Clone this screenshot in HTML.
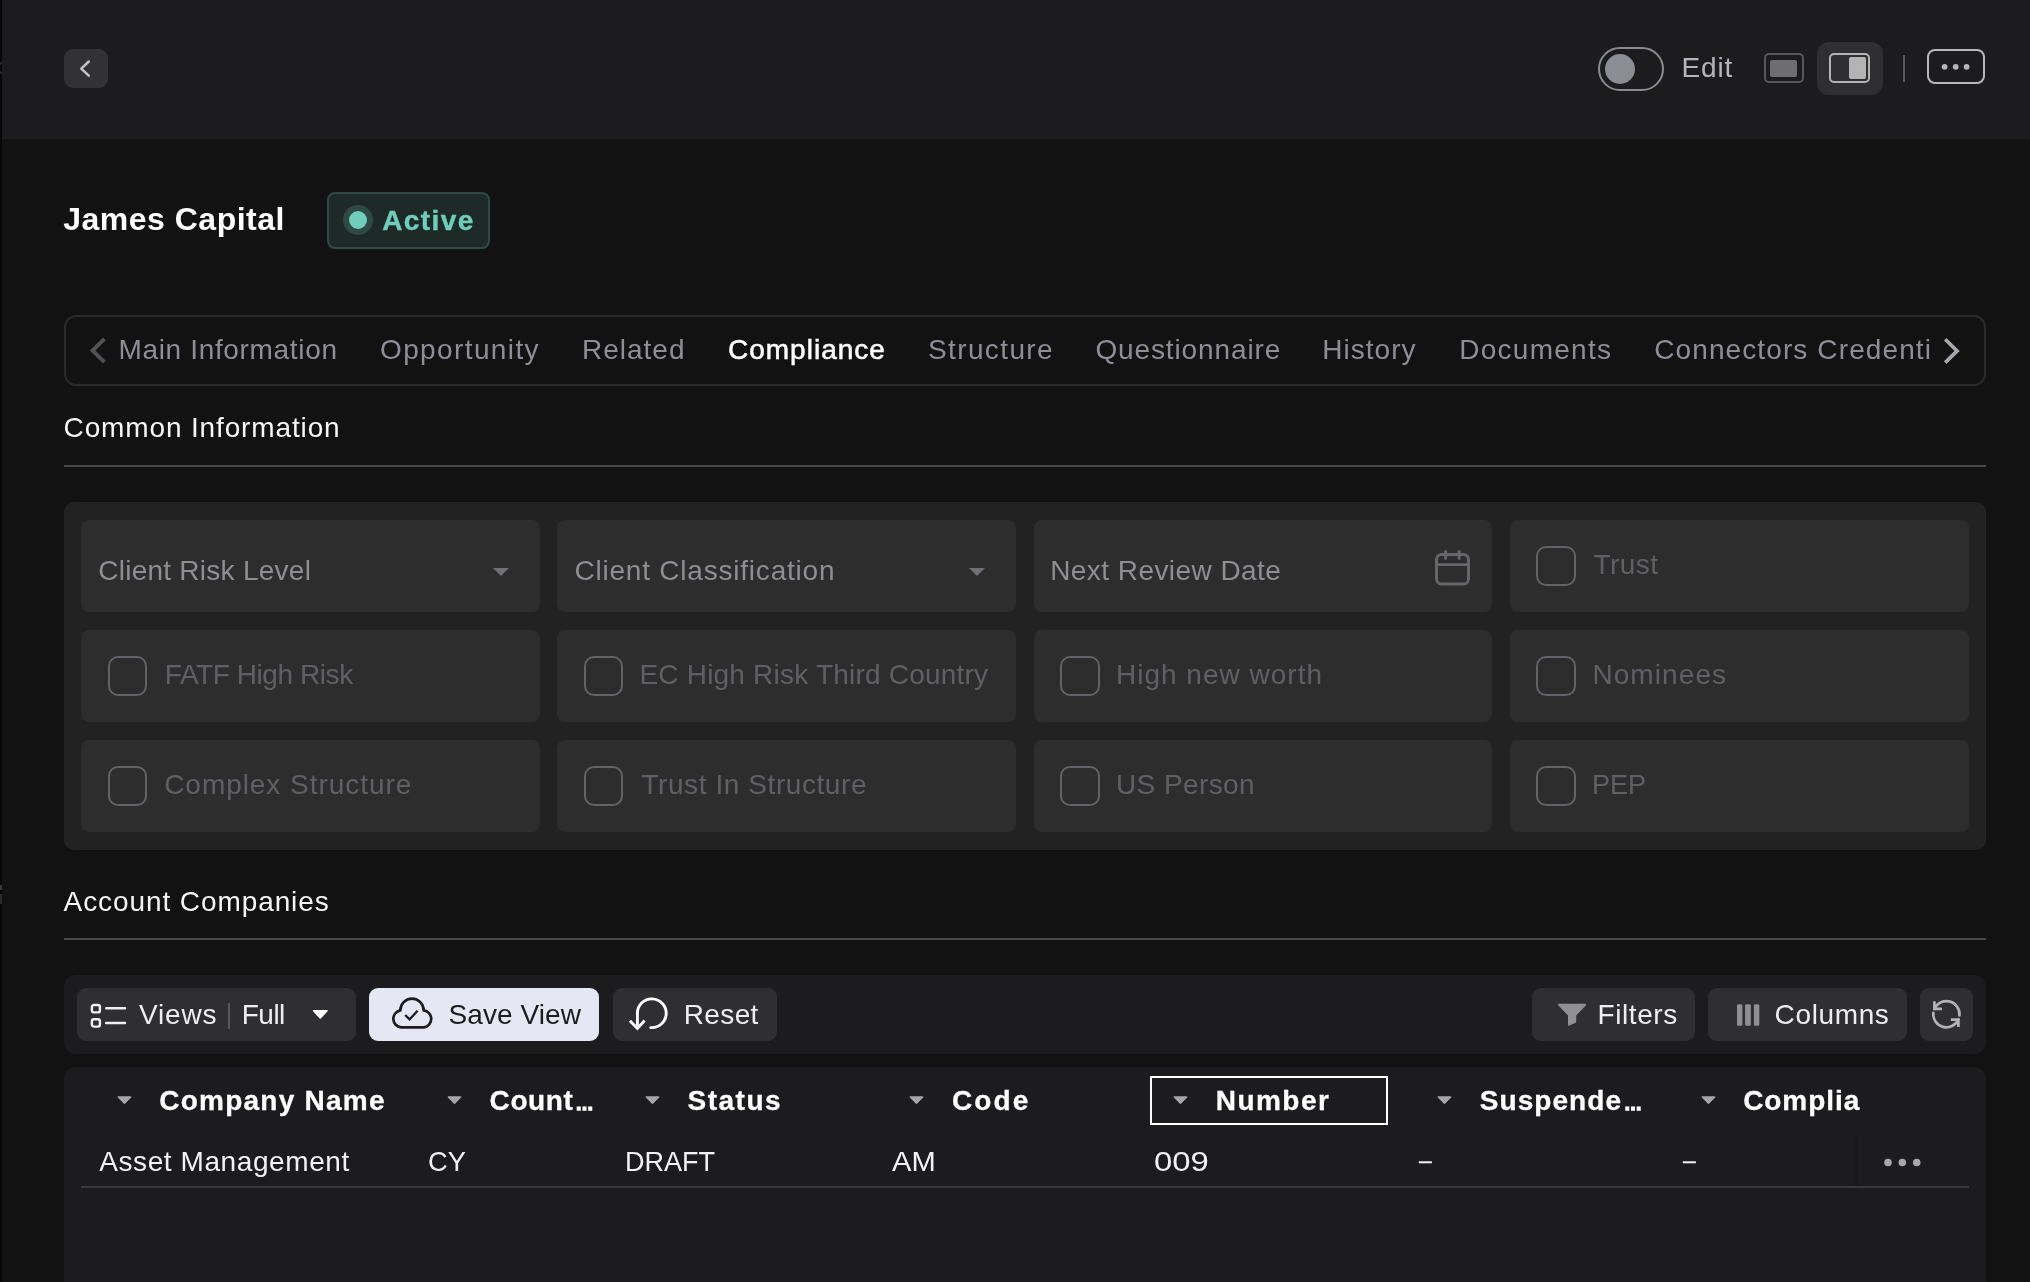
<!DOCTYPE html>
<html lang="en">
<head>
<meta charset="utf-8">
<title>James Capital - Compliance</title>
<style>
*{box-sizing:border-box;margin:0;padding:0}
html,body{width:2030px;height:1282px;overflow:hidden;background:#121212}
body{position:relative;font-family:"Liberation Sans",sans-serif;font-size:28px;color:#ececee}
#w{position:absolute;left:0;top:0;width:2030px;height:1282px;will-change:transform}
.abs{position:absolute}
.t{position:absolute;white-space:nowrap;line-height:1}
.el{font-size:18px;letter-spacing:0;-webkit-text-stroke:1.5px #fff;margin-left:2px}
#strip{left:0;top:0;width:2px;height:1282px;background:#060606}
#hdr{left:2px;top:0;width:2028px;height:139px;background:#1c1c1e}
#back{left:64px;top:49px;width:44px;height:39px;background:#323234;border-radius:9px}
#toggle{left:1598px;top:47px;width:66px;height:44px;border:2px solid #8a8a92;border-radius:22px}
#knob{left:1605px;top:54px;width:30px;height:30px;border-radius:50%;background:#8c8c94}
#ic1{left:1764px;top:53px;width:40px;height:30px;border:2px solid #58585a;border-radius:5px}
#ic1 i{position:absolute;left:4px;top:5px;right:5px;bottom:4px;background:#6e6e70;border-radius:2px}
#ic2bg{left:1817px;top:42px;width:66px;height:53px;background:#2f2f31;border-radius:12px}
#ic2{left:1829px;top:53px;width:41px;height:30px;border:2px solid #b4b4b4;border-radius:5px}
#ic2 i{position:absolute;left:18px;top:2px;right:2px;bottom:2px;background:#b4b4b4;border-radius:2px}
#vdiv{left:1903px;top:55px;width:2px;height:27px;background:#5a5a5e}
#more{left:1927px;top:49px;width:58px;height:35px;border:2.2px solid #b8b8b8;border-radius:8px}
#badge{left:327px;top:192px;width:163px;height:57px;background:#1e2a28;border:2px solid #2f4a45;border-radius:8px}
#dot1{left:343px;top:205px;width:30px;height:30px;border-radius:50%;background:#2f4a45}
#dot2{left:349px;top:211px;width:18px;height:18px;border-radius:50%;background:#70cdb9}
#tabs{left:64px;top:315px;width:1922px;height:71px;border:2px solid #2a2a2c;border-radius:12px}
.hr{height:2px;background:#48484a;left:64px;width:1922px}
#panel{left:64px;top:502px;width:1922px;height:348px;background:#222223;border-radius:10px}
.f{position:absolute;width:459px;height:92px;background:#2d2d2e;border-radius:8px}
.f .c{position:absolute;left:26px;top:26px;width:40px;height:40px;border:2px solid #636367;border-radius:10px}
.c1 .c,.c2 .c{left:27px;width:39px}
.c1{left:81px}.c2{left:557px}.c3{left:1034px;width:458px}.c4{left:1510px}
.r1{top:520px}.r2{top:630px}.r3{top:740px}
.caret{position:absolute;width:0;height:0;border-left:8px solid transparent;border-right:8px solid transparent;border-top:8px solid #707074}
#tbar{left:64px;top:975px;width:1922px;height:79px;background:#1c1c1e;border-radius:12px}
.btn{position:absolute;top:988px;height:53px;background:#2f2f31;border-radius:9px}
#table{left:64px;top:1067px;width:1922px;height:240px;background:#1c1c1e;border-radius:12px}
.hc{position:absolute;top:1094px;width:18px;height:12px}
</style>
</head>
<body>

<div id="w">
<div class="abs" id="hdr"></div>
<div class="abs" id="strip"></div>

<svg class="abs" style="left:0;top:58px" width="2" height="20" viewBox="0 0 2 20"><path d="M-4 10 L2.4 3.6 M-4 10 L2.4 16.4" stroke="#2e2e2e" stroke-width="1.6" fill="none"/></svg>
<div class="abs" style="left:0;top:885px;width:2px;height:5px;background:#3a3a3a"></div>
<div class="abs" style="left:0;top:894px;width:2px;height:10px;background:#2c2c2c"></div>

<!-- header -->
<div class="abs" id="back"><svg width="44" height="39" viewBox="0 0 44 39"><path d="M24.8 12.5 L17.25 19.6 L24.8 26.7" fill="none" stroke="#c4c4c4" stroke-width="2.5" stroke-linecap="round" stroke-linejoin="round"/></svg></div>
<div class="abs" id="toggle"></div><div class="abs" id="knob"></div>
<div class="abs" id="ic1"><i></i></div>
<div class="abs" id="ic2bg"></div>
<div class="abs" id="ic2"><i></i></div>
<div class="abs" id="vdiv"></div>
<div class="abs" id="more"><svg width="52" height="29" viewBox="0 0 52 29"><circle cx="15.6" cy="15.8" r="2.9" fill="#b6b6b6"/><circle cx="26.7" cy="15.8" r="2.9" fill="#b6b6b6"/><circle cx="37.6" cy="15.8" r="2.9" fill="#b6b6b6"/></svg></div>

<!-- title badge -->
<div class="abs" id="badge"></div><div class="abs" id="dot1"></div><div class="abs" id="dot2"></div>

<!-- tabs -->
<div class="abs" id="tabs"></div>
<svg class="abs" style="left:86px;top:334px" width="24" height="36" viewBox="0 0 24 36"><path d="M18.4 4.8 L6.5 16.5 L18.4 28.2" fill="none" stroke="#525256" stroke-width="3.9" stroke-linejoin="miter"/></svg>
<svg class="abs" style="left:1939px;top:334px" width="24" height="36" viewBox="0 0 24 36"><path d="M6.2 5.2 L18.1 16.9 L6.2 28.6" fill="none" stroke="#a6a6ac" stroke-width="3.7" stroke-linejoin="miter"/></svg>

<!-- common information -->
<div class="abs hr" style="top:465px"></div>
<div class="abs" id="panel"></div>
<div class="f c1 r1"><span class="caret" style="left:412px;top:48px"></span></div>
<div class="f c2 r1"><span class="caret" style="left:412px;top:48px"></span></div>
<div class="f c3 r1"><svg style="position:absolute;left:399px;top:28px" width="40" height="40" viewBox="0 0 40 40"><rect x="3.5" y="6.5" width="32" height="29.5" rx="5" fill="none" stroke="#66666a" stroke-width="3"/><path d="M3.5 16.6 H35.5" fill="none" stroke="#66666a" stroke-width="2.6"/><path d="M12.6 3.6 V10.2 M26.1 3.6 V10.2" fill="none" stroke="#66666a" stroke-width="3" stroke-linecap="round"/></svg></div>
<div class="f c4 r1"><span class="c"></span></div>
<div class="f c1 r2"><span class="c"></span></div>
<div class="f c2 r2"><span class="c"></span></div>
<div class="f c3 r2"><span class="c"></span></div>
<div class="f c4 r2"><span class="c"></span></div>
<div class="f c1 r3"><span class="c"></span></div>
<div class="f c2 r3"><span class="c"></span></div>
<div class="f c3 r3"><span class="c"></span></div>
<div class="f c4 r3"><span class="c"></span></div>

<!-- account companies -->
<div class="abs hr" style="top:938px"></div>
<div class="abs" id="tbar"></div>
<div class="btn" style="left:77px;width:279px"></div>
<div class="btn" style="left:369px;width:230px;background:#e6e7f5"></div>
<div class="btn" style="left:613px;width:164px"></div>
<div class="btn" style="left:1532px;width:163px"></div>
<div class="btn" style="left:1708px;width:199px"></div>
<div class="btn" style="left:1920px;width:53px"></div>

<!-- views icon -->
<svg class="abs" style="left:88px;top:1000px" width="42" height="32" viewBox="0 0 42 32"><rect x="3.9" y="5" width="8" height="7.4" rx="2" fill="none" stroke="#f0f0f2" stroke-width="2.4"/><rect x="3.9" y="19.2" width="8" height="7.4" rx="2" fill="none" stroke="#f0f0f2" stroke-width="2.4"/><path d="M18.2 8.2 H37 M18.2 22.9 H37" stroke="#f0f0f2" stroke-width="2.5" stroke-linecap="round"/></svg>
<div class="abs" style="left:228px;top:1003px;width:2px;height:26px;background:#58585c"></div>
<svg class="abs" style="left:310px;top:1008px" width="20" height="13" viewBox="0 0 20 13"><path d="M3.6 2.8 H17 L10.3 10 Z" fill="#fff" stroke="#fff" stroke-width="1.6" stroke-linejoin="round"/></svg>

<!-- cloud icon -->
<svg class="abs" style="left:388px;top:995px" width="50" height="38" viewBox="0 0 50 38"><path d="M13.1 32.4 A8.6 8.6 0 0 1 12.3 15.4 A11.3 11.3 0 0 1 35.7 15.4 A8.6 8.6 0 0 1 36.1 32.4 Z" fill="none" stroke="#1c1c1e" stroke-width="2.7" stroke-linejoin="round"/><path d="M17.2 20 L21.6 24.4 L29.6 15.7" fill="none" stroke="#1c1c1e" stroke-width="2.3"/></svg>

<!-- reset icon -->
<svg class="abs" style="left:625px;top:993px" width="48" height="42" viewBox="0 0 48 42"><path d="M25.8 34.6 A14.4 14.4 0 1 0 12.4 20 V34" fill="none" stroke="#fff" stroke-width="2.9" stroke-linecap="round"/><path d="M4.9 27.8 L12.4 35.4 L19.6 27.6" fill="none" stroke="#fff" stroke-width="2.9" stroke-linejoin="miter"/></svg>

<!-- filter icon -->
<svg class="abs" style="left:1555px;top:1001px" width="36" height="28" viewBox="0 0 36 28"><path d="M4 2.8 H30.2 Q31.8 3 30.8 4.6 L21.2 14.4 V21.4 L13.9 24.8 Q13 25.1 13 24.1 V14.4 L3.4 4.6 Q2.4 3 4 2.8 Z" fill="#909092"/></svg>

<!-- columns icon -->
<svg class="abs" style="left:1735px;top:1002px" width="28" height="26" viewBox="0 0 28 26"><rect x="2" y="2.3" width="5.4" height="21.4" rx="1.3" fill="#909092"/><rect x="10.1" y="2.3" width="5.7" height="21.4" rx="1.3" fill="#909092"/><rect x="18.9" y="2.3" width="5.4" height="21.4" rx="1.3" fill="#909092"/></svg>

<!-- refresh icon -->
<svg class="abs" style="left:1926px;top:994px" width="41" height="41" viewBox="0 0 41 41"><g fill="none" stroke="#b4b4b6" stroke-width="2.7" transform="translate(20.4 20.2)"><path d="M-11.97 -5.33 A13.1 13.1 0 0 1 13.04 1.26" stroke-linecap="round"/><path d="M-11.97 -12.83 V-5.33 H-4.47" stroke-linejoin="miter"/><path d="M11.97 5.33 A13.1 13.1 0 0 1 -13.04 -1.26" stroke-linecap="round"/><path d="M11.97 12.83 V5.33 H4.47" stroke-linejoin="miter"/></g></svg>

<!-- table -->
<div class="abs" id="table"></div>
<svg class="hc" style="left:116px" viewBox="0 0 18 12"><path d="M2.4 3 H14.6 L8.5 9.3 Z" fill="#a6a6a8" stroke="#a6a6a8" stroke-width="1.6" stroke-linejoin="round"/></svg>
<svg class="hc" style="left:446px" viewBox="0 0 18 12"><path d="M2.4 3 H14.6 L8.5 9.3 Z" fill="#a6a6a8" stroke="#a6a6a8" stroke-width="1.6" stroke-linejoin="round"/></svg>
<svg class="hc" style="left:644px" viewBox="0 0 18 12"><path d="M2.4 3 H14.6 L8.5 9.3 Z" fill="#a6a6a8" stroke="#a6a6a8" stroke-width="1.6" stroke-linejoin="round"/></svg>
<svg class="hc" style="left:908px" viewBox="0 0 18 12"><path d="M2.4 3 H14.6 L8.5 9.3 Z" fill="#a6a6a8" stroke="#a6a6a8" stroke-width="1.6" stroke-linejoin="round"/></svg>
<div class="abs" style="left:1150px;top:1076px;width:238px;height:49px;border:2px solid #fff"></div>
<svg class="hc" style="left:1172px" viewBox="0 0 18 12"><path d="M2.4 3 H14.6 L8.5 9.3 Z" fill="#a6a6a8" stroke="#a6a6a8" stroke-width="1.6" stroke-linejoin="round"/></svg>
<svg class="hc" style="left:1436px" viewBox="0 0 18 12"><path d="M2.4 3 H14.6 L8.5 9.3 Z" fill="#a6a6a8" stroke="#a6a6a8" stroke-width="1.6" stroke-linejoin="round"/></svg>
<svg class="hc" style="left:1700px" viewBox="0 0 18 12"><path d="M2.4 3 H14.6 L8.5 9.3 Z" fill="#a6a6a8" stroke="#a6a6a8" stroke-width="1.6" stroke-linejoin="round"/></svg>
<div class="abs" style="left:1852px;top:1136px;width:6px;height:50px;background:linear-gradient(90deg,rgba(0,0,0,0),rgba(0,0,0,.18))"></div>
<div class="abs" style="left:81px;top:1186px;width:1888px;height:2px;background:#38383c"></div>
<svg class="abs" style="left:1880px;top:1152px" width="46" height="20" viewBox="0 0 46 20"><circle cx="8" cy="10.5" r="3.8" fill="#a8a8a8"/><circle cx="22.3" cy="10.5" r="3.8" fill="#a8a8a8"/><circle cx="36.7" cy="10.5" r="3.8" fill="#a8a8a8"/></svg>

<div class="t" id="edit" style="left:1681.6px;top:54px;letter-spacing:0.80px;color:#b4b4bc">Edit</div>
<div class="t" id="title" style="left:63.2px;top:203px;letter-spacing:0.50px;font-size:32px;font-weight:bold;color:#fff">James Capital</div>
<div class="t" id="active" style="left:382.2px;top:207px;letter-spacing:1.44px;font-weight:bold;color:#70cdb9;-webkit-text-stroke:0.4px #70cdb9">Active</div>
<div class="t" id="tab1" style="left:118.4px;top:336px;letter-spacing:0.67px;color:#8e8e96">Main Information</div>
<div class="t" id="tab2" style="left:380.0px;top:336px;letter-spacing:1.38px;color:#8e8e96">Opportunity</div>
<div class="t" id="tab3" style="left:582.0px;top:336px;letter-spacing:1.00px;color:#8e8e96">Related</div>
<div class="t" id="tab4" style="left:728.0px;top:336px;letter-spacing:1.00px;color:#fff;-webkit-text-stroke:0.55px #fff">Compliance</div>
<div class="t" id="tab5" style="left:928.0px;top:336px;letter-spacing:1.38px;color:#8e8e96">Structure</div>
<div class="t" id="tab6" style="left:1095.4px;top:336px;letter-spacing:0.88px;color:#8e8e96">Questionnaire</div>
<div class="t" id="tab7" style="left:1322.2px;top:336px;letter-spacing:1.03px;color:#8e8e96">History</div>
<div class="t" id="tab8" style="left:1459.2px;top:336px;letter-spacing:1.27px;color:#8e8e96">Documents</div>
<div class="t" id="tab9" style="left:1654.2px;top:336px;letter-spacing:1.11px;color:#8e8e96">Connectors Credenti</div>
<div class="t" id="h1" style="left:63.6px;top:414px;letter-spacing:0.86px;color:#f6f6f8">Common Information</div>
<div class="t" id="f11" style="left:98.2px;top:557px;letter-spacing:0.26px;color:#8e8e93">Client Risk Level</div>
<div class="t" id="f12" style="left:574.4px;top:557px;letter-spacing:0.79px;color:#8e8e93">Client Classification</div>
<div class="t" id="f13" style="left:1050.2px;top:557px;letter-spacing:0.44px;color:#8e8e93">Next Review Date</div>
<div class="t" id="f14" style="left:1593.4px;top:551px;letter-spacing:0.45px;color:#606064">Trust</div>
<div class="t" id="f21" style="left:164.8px;top:661px;letter-spacing:-0.43px;color:#606064">FATF High Risk</div>
<div class="t" id="f22" style="left:639.4px;top:661px;letter-spacing:0.21px;color:#606064">EC High Risk Third Country</div>
<div class="t" id="f23" style="left:1116.0px;top:661px;letter-spacing:1.00px;color:#606064">High new worth</div>
<div class="t" id="f24" style="left:1592.4px;top:661px;letter-spacing:1.09px;color:#606064">Nominees</div>
<div class="t" id="f31" style="left:164.2px;top:771px;letter-spacing:0.95px;color:#606064">Complex Structure</div>
<div class="t" id="f32" style="left:641.4px;top:771px;letter-spacing:0.58px;color:#606064">Trust In Structure</div>
<div class="t" id="f33" style="left:1116.0px;top:771px;letter-spacing:0.40px;color:#606064">US Person</div>
<div class="t" id="f34" style="left:1592.4px;top:771px;transform:scaleX(0.967);transform-origin:0 0;color:#606064">PEP</div>
<div class="t" id="h2" style="left:63.6px;top:888px;letter-spacing:0.91px;color:#f6f6f8">Account Companies</div>
<div class="t" id="b1" style="left:139.0px;top:1000.5px;letter-spacing:0.85px;color:#eeeef0">Views</div>
<div class="t" id="b2" style="left:241.8px;top:1000.5px;letter-spacing:-0.53px;color:#eeeef0">Full</div>
<div class="t" id="b3" style="left:448.6px;top:1000.5px;letter-spacing:0.07px;color:#1c1c1e">Save View</div>
<div class="t" id="b4" style="left:683.8px;top:1000.5px;letter-spacing:0.35px;color:#eeeef0">Reset</div>
<div class="t" id="b5" style="left:1597.6px;top:1000.5px;letter-spacing:0.57px;color:#eeeef0">Filters</div>
<div class="t" id="b6" style="left:1774.6px;top:1000.5px;letter-spacing:0.63px;color:#eeeef0">Columns</div>
<div class="t" id="th1" style="left:159.2px;top:1086.5px;letter-spacing:1.25px;color:#fff;font-weight:bold;-webkit-text-stroke:0.3px #fff">Company Name</div>
<div class="t" id="th2" style="left:489.6px;top:1086.5px;letter-spacing:0.60px;color:#fff;font-weight:bold;-webkit-text-stroke:0.3px #fff">Count<span class="el">…</span></div>
<div class="t" id="th3" style="left:687.6px;top:1086.5px;letter-spacing:1.48px;color:#fff;font-weight:bold;-webkit-text-stroke:0.3px #fff">Status</div>
<div class="t" id="th4" style="left:952.0px;top:1086.5px;letter-spacing:2.07px;color:#fff;font-weight:bold;-webkit-text-stroke:0.3px #fff">Code</div>
<div class="t" id="th5" style="left:1215.8px;top:1086.5px;letter-spacing:1.44px;color:#fff;font-weight:bold;-webkit-text-stroke:0.3px #fff">Number</div>
<div class="t" id="th6" style="left:1479.8px;top:1086.5px;letter-spacing:1.05px;color:#fff;font-weight:bold;-webkit-text-stroke:0.3px #fff">Suspende<span class="el">…</span></div>
<div class="t" id="th7" style="left:1743.2px;top:1086.5px;letter-spacing:0.93px;color:#fff;font-weight:bold;-webkit-text-stroke:0.3px #fff">Complia</div>
<div class="t" id="td1" style="left:99.2px;top:1147.5px;letter-spacing:0.59px;color:#f2f2f4">Asset Management</div>
<div class="t" id="td2" style="left:428.2px;top:1147.5px;transform:scaleX(0.973);transform-origin:0 0;color:#f2f2f4">CY</div>
<div class="t" id="td3" style="left:625.2px;top:1147.5px;transform:scaleX(0.965);transform-origin:0 0;color:#f2f2f4">DRAFT</div>
<div class="t" id="td4" style="left:891.6px;top:1147.5px;transform:scaleX(1.040);transform-origin:0 0;color:#f2f2f4">AM</div>
<div class="t" id="td5" style="left:1154.4px;top:1147.5px;transform:scaleX(1.173);transform-origin:0 0;color:#f2f2f4">009</div>
<div class="t" id="td6" style="left:1419.0px;top:1149px;letter-spacing:0.00px;color:#ececee;font-size:23px;-webkit-text-stroke:0.3px #ececee">–</div>
<div class="t" id="td7" style="left:1683.0px;top:1149px;letter-spacing:0.00px;color:#ececee;font-size:23px;-webkit-text-stroke:0.3px #ececee">–</div>
</div>
</body>
</html>
